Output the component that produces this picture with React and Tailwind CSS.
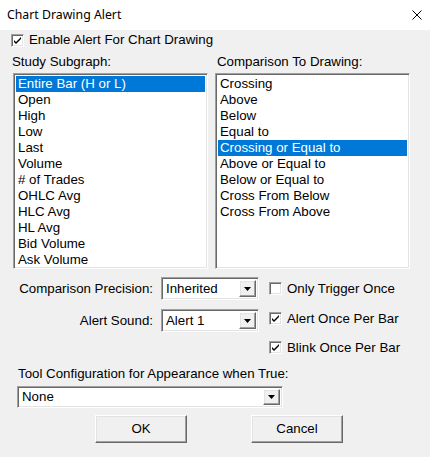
import React from "react";

const sunken =
  "border border-t-[#a0a0a0] border-l-[#a0a0a0] border-r-white border-b-white shadow-[inset_1px_1px_0_#696969,inset_-1px_-1px_0_#e3e3e3]";
const raised =
  "border border-t-white border-l-white border-r-[#696969] border-b-[#696969] shadow-[inset_-1px_-1px_0_#a0a0a0,inset_1px_1px_0_#e3e3e3]";

function CheckBox({ checked }) {
  return (
    <div className={`w-[13px] h-[13px] shrink-0 bg-white flex items-center justify-center ${sunken}`}>
      {checked && (
        <svg width="9" height="9" viewBox="0 0 9 9">
          <path d="M1 4 L3 6 L8 1 L8 3 L3 8 L1 6 Z" fill="#000" />
        </svg>
      )}
    </div>
  );
}

function Arrow() {
  return (
    <svg width="7" height="4" viewBox="0 0 7 4">
      <path d="M0 0 H7 L3.5 4 Z" fill="#000" />
    </svg>
  );
}

function Dropdown({ value, className }) {
  return (
    <div className={`bg-white flex items-stretch p-[2px] ${sunken} ${className}`}>
      <div className="flex-1 flex items-center pl-[2px] overflow-hidden whitespace-nowrap">{value}</div>
      <div className={`w-[17px] bg-[#f0f0f0] flex items-center justify-center ${raised}`}>
        <Arrow />
      </div>
    </div>
  );
}

function ListBox({ items, selected }) {
  return (
    <div className={`w-[195px] h-[196px] bg-white p-[2px] ${sunken}`}>
      {items.map((it, i) => (
        <div
          key={it}
          className={`h-[16px] flex items-center pl-[2px] whitespace-nowrap ${
            i === selected ? "bg-[#0078d7] text-white" : ""
          }`}
        >
          {it}
        </div>
      ))}
    </div>
  );
}

export default function App() {
  const left = [
    "Entire Bar (H or L)",
    "Open",
    "High",
    "Low",
    "Last",
    "Volume",
    "# of Trades",
    "OHLC Avg",
    "HLC Avg",
    "HL Avg",
    "Bid Volume",
    "Ask Volume",
  ];
  const right = [
    "Crossing",
    "Above",
    "Below",
    "Equal to",
    "Crossing or Equal to",
    "Above or Equal to",
    "Below or Equal to",
    "Cross From Below",
    "Cross From Above",
  ];
  return (
    <div className="w-[430px] h-[457px] bg-[#f0f0f0] overflow-hidden font-['Liberation_Sans',Arial,sans-serif] text-[13.3px] leading-none text-black">
      <div className="h-[30px] bg-white flex items-center justify-between pl-[7px] pr-[8px]">
        <span className="font-['Noto_Sans',sans-serif] text-[12.3px]">Chart Drawing Alert</span>
        <svg width="10" height="10" viewBox="0 0 10 10">
          <path d="M0.5 0.5 L9.5 9.5 M9.5 0.5 L0.5 9.5" stroke="#000" strokeWidth="1" />
        </svg>
      </div>

      <div className="h-[20px] flex items-center pl-[11px]">
        <CheckBox checked />
        <span className="ml-[5px]">Enable Alert For Chart Drawing</span>
      </div>

      <div className="flex pl-[13px] gap-[7px]">
        <div className="flex flex-col">
          <div className="h-[23px] flex items-center -ml-px">Study Subgraph:</div>
          <ListBox items={left} selected={0} />
        </div>
        <div className="flex flex-col">
          <div className="h-[23px] flex items-center pl-[2px]">Comparison To Drawing:</div>
          <ListBox items={right} selected={4} />
        </div>
      </div>

      <div className="mt-[8px] flex items-center h-[23px]">
        <div className="w-[153px] text-right whitespace-nowrap">Comparison Precision:</div>
        <Dropdown value="Inherited" className="ml-[8px] w-[98px] h-[23px]" />
        <div className="ml-[10px] flex items-center">
          <CheckBox />
          <span className="ml-[5px]">Only Trigger Once</span>
        </div>
      </div>

      <div className="mt-[9px] flex items-center h-[23px]">
        <div className="w-[153px] text-right">Alert Sound:</div>
        <Dropdown value="Alert 1" className="ml-[8px] w-[98px] h-[23px]" />
        <div className="ml-[10px] flex items-center self-start mt-[3px]">
          <CheckBox checked />
          <span className="ml-[5px]">Alert Once Per Bar</span>
        </div>
      </div>

      <div className="mt-[4px] flex items-center h-[23px] pl-[269px]">
        <CheckBox checked />
        <span className="ml-[5px]">Blink Once Per Bar</span>
      </div>

      <div className="mt-[3px] h-[24px] flex items-center pl-[18px]">
        Tool Configuration for Appearance when True:
      </div>
      <div className="pl-[17px]">
        <Dropdown value="None" className="w-[266px] h-[22px]" />
      </div>

      <div className="mt-[7px] flex pl-[95px] gap-[64px]">
        <div className={`w-[92px] h-[28px] bg-[#f0f0f0] flex items-center justify-center ${raised}`}>OK</div>
        <div className={`w-[92px] h-[28px] bg-[#f0f0f0] flex items-center justify-center ${raised}`}>Cancel</div>
      </div>
    </div>
  );
}
